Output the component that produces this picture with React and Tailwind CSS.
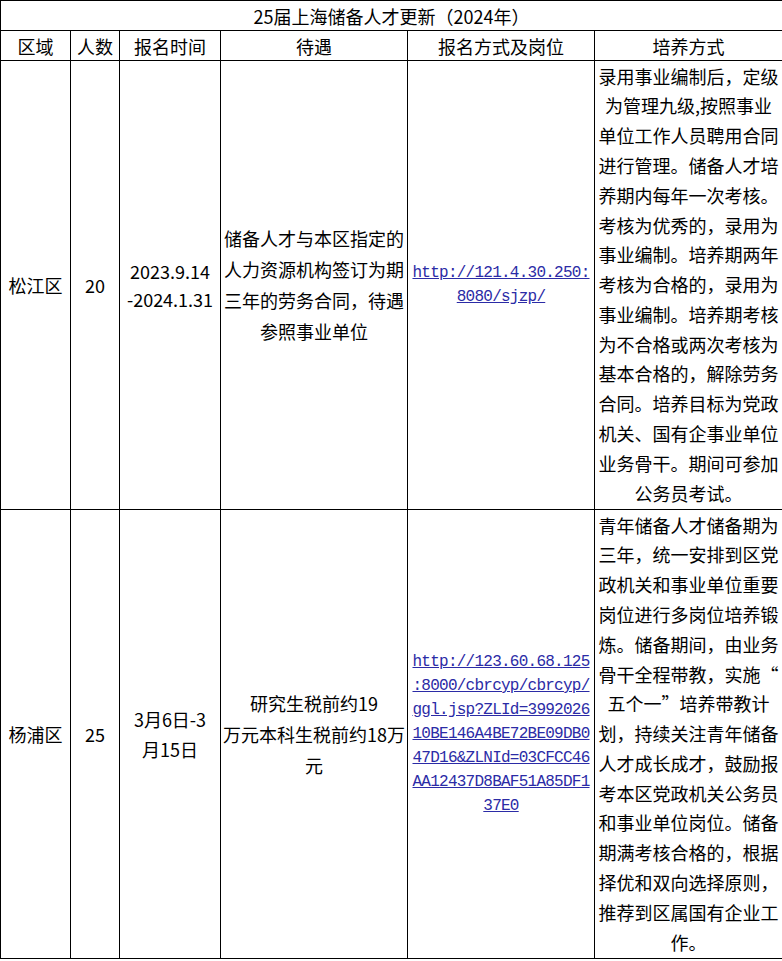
import React from 'react'

const songjiangPlan = [
  '录用事业编制后，定级',
  '为管理九级,按照事业',
  '单位工作人员聘用合同',
  '进行管理。储备人才培',
  '养期内每年一次考核。',
  '考核为优秀的，录用为',
  '事业编制。培养期两年',
  '考核为合格的，录用为',
  '事业编制。培养期考核',
  '为不合格或两次考核为',
  '基本合格的，解除劳务',
  '合同。培养目标为党政',
  '机关、国有企事业单位',
  '业务骨干。期间可参加',
  '公务员考试。',
]

const yangpuPlan = [
  '青年储备人才储备期为',
  '三年，统一安排到区党',
  '政机关和事业单位重要',
  '岗位进行多岗位培养锻',
  '炼。储备期间，由业务',
  '骨干全程带教，实施“',
  '五个一”培养带教计',
  '划，持续关注青年储备',
  '人才成长成才，鼓励报',
  '考本区党政机关公务员',
  '和事业单位岗位。储备',
  '期满考核合格的，根据',
  '择优和双向选择原则，',
  '推荐到区属国有企业工',
  '作。',
]

const rows = [
  {
    area: '松江区',
    count: '20',
    time: ['2023.9.14', '-2024.1.31'],
    timeLeading: 'leading-[28px]',
    pay: ['储备人才与本区指定的', '人力资源机构签订为期', '三年的劳务合同，待遇', '参照事业单位'],
    link: ['http://121.4.30.250:', '8080/sjzp/'],
    plan: songjiangPlan,
  },
  {
    area: '杨浦区',
    count: '25',
    time: ['3月6日-3', '月15日'],
    timeLeading: 'leading-[30px]',
    pay: ['研究生税前约19', '万元本科生税前约18万', '元'],
    link: [
      'http://123.60.68.125',
      ':8000/cbrcyp/cbrcyp/',
      'ggl.jsp?ZLId=3992026',
      '10BE146A4BE72BE09DB0',
      '47D16&ZLNId=03CFCC46',
      'AA12437D8BAF51A85DF1',
      '37E0',
    ],
    plan: yangpuPlan,
  },
]

function Lines({ items, className = 'leading-[30px]' }) {
  return (
    <div className={className}>
      {items.map((line, i) => (
        <div key={i} className="whitespace-nowrap">{line}</div>
      ))}
    </div>
  )
}

const cell = 'border border-black p-0 text-center align-middle'

export default function App() {
  return (
    <div className="w-[782px] h-[961px] bg-white text-black text-[18px] font-['Noto_Sans_CJK_SC','Noto_Sans',sans-serif]">
      <table className="w-[782px] table-fixed border-collapse">
        <colgroup>
          <col className="w-[70px]" />
          <col className="w-[49px]" />
          <col className="w-[101px]" />
          <col className="w-[187px]" />
          <col className="w-[187px]" />
          <col className="w-[188px]" />
        </colgroup>
        <tbody>
          <tr className="h-[30px]">
            <td colSpan={6} className={cell + ' leading-[28px]'}>
              25届上海储备人才更新（2024年）
            </td>
          </tr>
          <tr className="h-[30px]">
            {['区域', '人数', '报名时间', '待遇', '报名方式及岗位', '培养方式'].map((h) => (
              <td key={h} className={cell + ' leading-[28px]'}>{h}</td>
            ))}
          </tr>
          {rows.map((r) => (
            <tr key={r.area} className="h-[449px]">
              <td className={cell}>{r.area}</td>
              <td className={cell}>{r.count}</td>
              <td className={cell}>
                <Lines items={r.time} className={r.timeLeading} />
              </td>
              <td className={cell}>
                <Lines items={r.pay} className="leading-[31px]" />
              </td>
              <td className={cell}>
                <div className="leading-[24px] font-['Liberation_Mono',monospace] text-[16px] tracking-[-0.75px] text-[#2b2ba6] underline">
                  {r.link.map((line, i) => (
                    <div key={i} className="whitespace-nowrap">{line}</div>
                  ))}
                </div>
              </td>
              <td className={cell}>
                <Lines items={r.plan} className="leading-[29.8px]" />
              </td>
            </tr>
          ))}
        </tbody>
      </table>
    </div>
  )
}
